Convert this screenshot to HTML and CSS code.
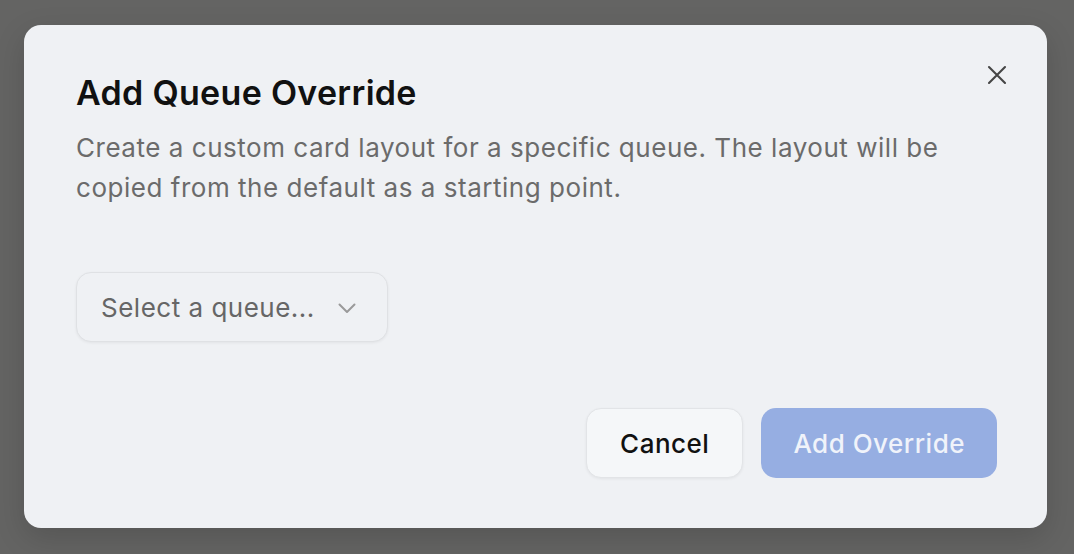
FILE: index.html
```html
<!DOCTYPE html>
<html lang="en">
<head>
<meta charset="utf-8">
<title>Add Queue Override</title>
<link rel="stylesheet" href="styles.css">
</head>
<body>
<div class="backdrop">
  <div class="dialog" role="dialog" aria-labelledby="dlg-title">
    <button class="close" aria-label="Close">
      <svg width="20" height="20" viewBox="0 0 20 20" fill="none" stroke="#454545" stroke-width="2.1" stroke-linecap="round"><path d="M2 2L18 18M18 2L2 18"/></svg>
    </button>
    <h2 class="title" id="dlg-title">Add Queue Override</h2>
    <p class="desc">Create a custom card layout for a specific queue. The layout will be copied from the default as a starting point.</p>
    <div class="field">
      <button class="select">
        <span class="select-label">Select a queue...</span>
        <svg class="chev" width="18" height="11" viewBox="0 0 18 11" fill="none" stroke="#9a9a9a" stroke-width="2" stroke-linecap="round" stroke-linejoin="round"><path d="M1.5 1.5L9 9L16.5 1.5"/></svg>
      </button>
    </div>
    <div class="actions">
      <button class="btn btn-cancel">Cancel</button>
      <button class="btn btn-primary">Add Override</button>
    </div>
  </div>
</div>
</body>
</html>
```
FILE: styles.css
```css
html, body {
  margin: 0;
  padding: 0;
  height: 100%;
}
body {
  background: #646463;
  font-family: Inter, "Noto Sans", "Liberation Sans", sans-serif;
}
.backdrop {
  padding: 25px 27px 26px 24px;
  box-sizing: border-box;
  height: 100%;
}
.dialog {
  position: relative;
  background: #eff1f4;
  border-radius: 17px;
  height: 100%;
  box-sizing: border-box;
  padding: 48px 50px 50px 52px;
  display: flex;
  flex-direction: column;
  box-shadow: 0 10px 30px rgba(0,0,0,0.15);
}
.close {
  position: absolute;
  top: 40px;
  right: 40px;
  background: none;
  border: 0;
  padding: 0;
  width: 20px;
  height: 20px;
  cursor: pointer;
}
.close svg { display: block; }
.title {
  margin: 0;
  font-size: 34px;
  font-weight: 600;
  line-height: 40px;
  color: #111;
  letter-spacing: 0.3px;
}
.desc {
  margin: 15px 0 0;
  font-size: 26px;
  line-height: 40px;
  color: #6b6b6b;
  letter-spacing: 0.53px;
}
.field {
  margin-top: 64px;
}
.select {
  display: inline-flex;
  align-items: center;
  gap: 23px;
  height: 70px;
  box-sizing: border-box;
  padding: 0 31px 0 24px;
  background: #eff1f4;
  border: 1.5px solid #dfe1e4;
  border-radius: 15px;
  box-shadow: 0 1px 3px rgba(0,0,0,0.06);
  font-family: inherit;
  font-size: 26px;
  letter-spacing: 0.5px;
  color: #666;
}
.chev { display: block; margin-top: 2px; }
.actions {
  margin-top: auto;
  display: flex;
  justify-content: flex-end;
  gap: 18px;
}
.btn {
  height: 70px;
  box-sizing: border-box;
  border-radius: 15px;
  font-family: inherit;
  font-size: 26px;
  font-weight: 500;
  letter-spacing: 0.5px;
  cursor: pointer;
}
.btn-cancel {
  padding: 0 33px;
  background: #f5f7f9;
  border: 1.5px solid #e2e4e7;
  color: #111;
  box-shadow: 0 1px 3px rgba(0,0,0,0.06);
}
.btn-primary {
  padding: 0 32px;
  background: #96aee2;
  border: 0;
  color: #f0f3fa;
}
```
